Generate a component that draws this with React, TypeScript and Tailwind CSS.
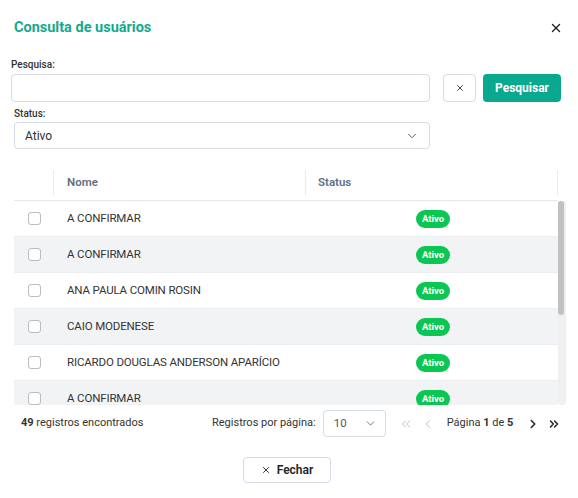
import { ChevronDown, ChevronLeft, ChevronRight, ChevronsLeft, ChevronsRight, X } from "lucide-react";

const rows = [
  "A CONFIRMAR",
  "A CONFIRMAR",
  "ANA PAULA COMIN ROSIN",
  "CAIO MODENESE",
  "RICARDO DOUGLAS ANDERSON APARÍCIO",
  "A CONFIRMAR",
];

export default function App() {
  return (
    <div className="relative h-[498px] w-[578px] overflow-hidden bg-white font-['Roboto',sans-serif] text-[#2d3239]">
      <div className="flex items-center justify-between pl-[14px] pr-[15px] pt-[18px]">
        <div className="text-[14.5px] font-bold leading-[20px] text-[#14a98c]">Consulta de usuários</div>
        <X size={14} strokeWidth={2.4} className="text-[#222]" />
      </div>

      <div className="mt-[21px] pl-[11px] text-[10px] font-medium leading-[12px] text-[#333]">Pesquisa:</div>
      <div className="mt-[3px] flex items-center pl-[11px]">
        <div className="h-[28px] w-[419px] rounded-[4px] border border-[#d6dde8]" />
        <button className="ml-[13px] flex h-[28px] w-[33px] items-center justify-center rounded-[4px] border border-[#d6dde8]">
          <X size={10} strokeWidth={2.2} className="text-[#333]" />
        </button>
        <button className="ml-[7px] h-[28px] w-[78px] rounded-[4px] bg-[#0aa88f] text-[12px] font-bold text-white">
          Pesquisar
        </button>
      </div>

      <div className="mt-[6px] pl-[14px] text-[10px] font-medium leading-[12px] text-[#333]">Status:</div>
      <div className="ml-[14px] mt-[2px] flex h-[27px] w-[416px] items-center justify-between rounded-[4px] border border-[#d6dde8] pl-[10px] pr-[10px] text-[12px]">
        <span>Ativo</span>
        <ChevronDown size={14} strokeWidth={1.6} className="text-[#555]" />
      </div>

      <div className="ml-[14px] mt-[16px] w-[552px]">
        <div className="flex h-[36px] w-[544px] items-center border-b border-[#e5e8ec] text-[11.5px] font-semibold text-[#5f6f86]">
          <div className="h-[25px] w-[40px] border-r border-[#e7eaee]" />
          <div className="flex h-[25px] w-[252px] items-center border-r border-[#e7eaee] pl-[13px]">Nome</div>
          <div className="flex h-[25px] w-[252px] items-center border-r border-[#e7eaee] pl-[12px]">Status</div>
        </div>
        <div className="flex h-[204px] overflow-hidden">
          <div className="w-[544px]">
            {rows.map((name, i) => (
              <div
                key={i}
                className={`flex h-[36px] shrink-0 items-center border-b border-[#eceef1] text-[11.5px] tracking-[-0.15px] ${i % 2 === 1 ? "bg-[#f2f3f5]" : "bg-white"}`}
              >
                <div className="flex w-[40px] justify-center">
                  <div className="h-[13px] w-[13px] rounded-[3px] border border-[#b9bcc1] bg-white" />
                </div>
                <div className="w-[252px] pl-[13px] text-[#333]">{name}</div>
                <div className="flex w-[252px] justify-center pl-[2px]">
                  <span className="rounded-full bg-[#0cc654] px-[6px] py-[3px] text-[9.5px] font-bold leading-[12px] tracking-normal text-white">
                    Ativo
                  </span>
                </div>
              </div>
            ))}
          </div>
          <div className="h-[204px] w-[8px] rounded-b-[4px] bg-[#f0f0f0]">
            <div className="h-[114px] w-[6px] rounded-[3px] bg-[#c1c1c1]" />
          </div>
        </div>
      </div>

      <div className="mt-[5px] flex h-[27px] items-center pl-[21px] text-[11px] text-[#333]">
        <div className="w-[191px]">
          <span className="font-bold">49</span> registros encontrados
        </div>
        <span>Registros por página:</span>
        <div className="ml-[7px] flex h-[27px] w-[63px] items-center justify-between rounded-[4px] border border-[#d6dde8] pl-[10px] pr-[8px] text-[11.5px]">
          <span className="text-[#555]">10</span>
          <ChevronDown size={13} strokeWidth={1.6} className="text-[#666]" />
        </div>
        <ChevronsLeft size={14} strokeWidth={1.6} className="ml-[13px] text-[#b2bac6]" />
        <ChevronLeft size={14} strokeWidth={1.6} className="ml-[8px] text-[#b2bac6]" />
        <span className="ml-[12px]">
          Página <span className="font-bold">1</span> de <span className="font-bold">5</span>
        </span>
        <ChevronRight size={14} strokeWidth={2.6} className="ml-[13px] text-[#222]" />
        <ChevronsRight size={14} strokeWidth={2.6} className="ml-[7px] text-[#222]" />
      </div>

      <div className="mt-[20px] flex justify-center pr-[4px]">
        <button className="flex h-[26px] w-[88px] items-center justify-center gap-[6px] rounded-[4px] border border-[#d6dde8] text-[12px] font-semibold text-[#222]">
          <X size={10} strokeWidth={2.2} />
          Fechar
        </button>
      </div>
    </div>
  );
}
